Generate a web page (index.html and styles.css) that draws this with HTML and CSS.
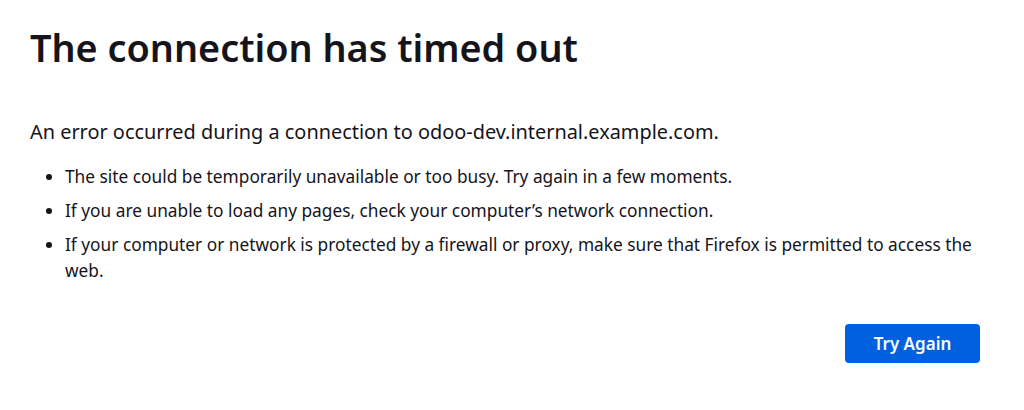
FILE: index.html
```html
<!DOCTYPE html>
<html lang="en">
<head>
<meta charset="utf-8">
<title>Problem loading page</title>
<link rel="stylesheet" href="styles.css">
</head>
<body>
<div class="container">
  <h1 class="title">The connection has timed out</h1>
  <p class="intro">An error occurred during a connection to odoo-dev.internal.example.com.</p>
  <ul class="tips">
    <li>The site could be temporarily unavailable or too busy. Try again in a few moments.</li>
    <li>If you are unable to load any pages, check your computer’s network connection.</li>
    <li>If your computer or network is protected by a firewall or proxy, make sure that Firefox is permitted to access the web.</li>
  </ul>
  <div class="actions">
    <button class="primary">Try Again</button>
  </div>
</div>
</body>
</html>
```
FILE: styles.css
```css
html, body {
  margin: 0;
  padding: 0;
  background: #ffffff;
}
body {
  font-family: "Noto Sans", "Open Sans", sans-serif;
  color: #15141a;
}
.container {
  width: 950px;
  padding: 0 0 0 30px;
}
.title {
  font-size: 37.8px;
  font-weight: 600;
  line-height: 52px;
  margin: 22px 0 0 0;
}
.intro {
  font-size: 19.9px;
  line-height: 28px;
  margin: 44px 0 0 0;
}
.tips {
  margin: 18px 0 0 0;
  padding-left: 35px;
  font-size: 17.3px;
  line-height: 26px;
}
.tips li {
  margin-bottom: 8px;
}
.actions {
  display: flex;
  justify-content: flex-end;
  margin-top: 40px;
}
.primary {
  font-family: inherit;
  background: #0061e0;
  color: #fbfbfe;
  border: none;
  border-radius: 4px;
  width: 135px;
  height: 39px;
  font-size: 17px;
  font-weight: 600;
}
```
